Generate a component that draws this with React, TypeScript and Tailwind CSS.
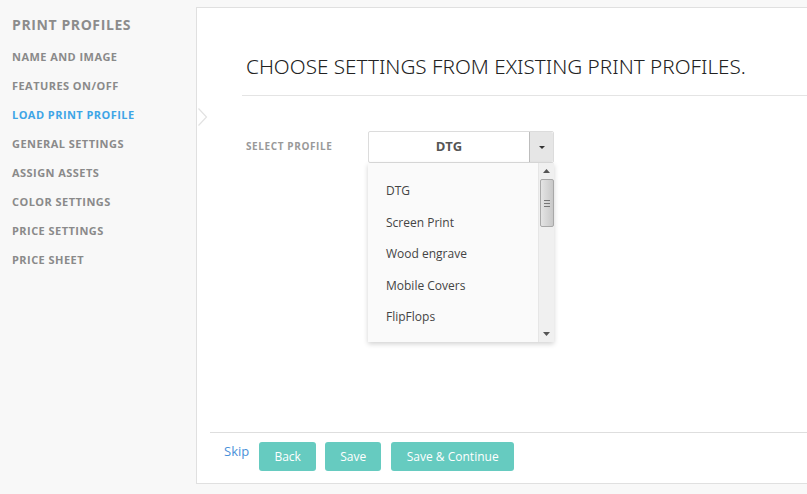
import { FC } from 'react'

const steps = [
  'NAME AND IMAGE',
  'FEATURES ON/OFF',
  'LOAD PRINT PROFILE',
  'GENERAL SETTINGS',
  'ASSIGN ASSETS',
  'COLOR SETTINGS',
  'PRICE SETTINGS',
  'PRICE SHEET',
]

const profiles = ['DTG', 'Screen Print', 'Wood engrave', 'Mobile Covers', 'FlipFlops']

const Sidebar: FC = () => (
  <aside className="w-[196px] shrink-0 pl-3 pt-[15px] font-['Open_Sans',sans-serif]">
    <div className="text-[14px] font-bold text-[#8c8c8c] leading-[20px] tracking-[0.6px]">
      PRINT PROFILES
    </div>
    <ul className="mt-[7px]">
      {steps.map((s) => (
        <li
          key={s}
          className={
            'h-[29px] leading-[29px] text-[11px] font-bold tracking-[0.45px] ' +
            (s === 'LOAD PRINT PROFILE' ? 'text-[#3ea5e6]' : 'text-[#8a8a8a]')
          }
        >
          {s}
        </li>
      ))}
    </ul>
  </aside>
)

const Scrollbar: FC = () => (
  <div className="w-[16px] shrink-0 bg-[#f0f0f0] flex flex-col items-center border-l border-[#e6e6e6]">
    <div className="h-[16px] flex items-center justify-center">
      <svg width="7" height="4" viewBox="0 0 7 4">
        <path d="M3.5 0 L7 4 L0 4 Z" fill="#555" />
      </svg>
    </div>
    <div className="w-[14px] h-[48px] rounded-[2px] border border-[#a8a8a8] bg-gradient-to-r from-[#e4e4e4] via-[#d6d6d6] to-[#c8c8c8] flex flex-col items-center justify-center gap-[2px]">
      <span className="block w-[6px] h-px bg-[#777]" />
      <span className="block w-[6px] h-px bg-[#777]" />
      <span className="block w-[6px] h-px bg-[#777]" />
    </div>
    <div className="flex-1" />
    <div className="h-[16px] flex items-center justify-center">
      <svg width="7" height="4" viewBox="0 0 7 4">
        <path d="M0 0 L7 0 L3.5 4 Z" fill="#555" />
      </svg>
    </div>
  </div>
)

const ProfileSelect: FC = () => (
  <div className="relative w-[186px]">
    <div className="flex h-[32px] border border-[#dcdcdc] rounded-[2px] bg-white">
      <div className="flex-1 flex items-center justify-center text-[13px] font-bold text-[#555]">
        DTG
      </div>
      <div className="w-[24px] bg-[#e6e6e6] border-l border-[#bdbdbd] rounded-r-[2px] flex items-center justify-center">
        <svg width="6" height="3" viewBox="0 0 6 3">
          <path d="M0 0 L6 0 L3 3 Z" fill="#333" />
        </svg>
      </div>
    </div>
    <div className="absolute left-0 top-[32px] w-[186px] h-[179px] bg-[#fafafa] shadow-[0_2px_5px_rgba(0,0,0,0.18)] flex">
      <ul className="flex-1 pt-[12px] pl-[18px]">
        {profiles.map((p) => (
          <li key={p} className="h-[31.5px] leading-[31px] text-[12px] text-[#444]">
            {p}
          </li>
        ))}
      </ul>
      <Scrollbar />
    </div>
  </div>
)

const Btn: FC<{ label: string; w: string }> = ({ label, w }) => (
  <button
    className={
      'h-[29px] rounded-[3px] bg-[#66cbc0] text-white text-[12px] ' + w
    }
  >
    {label}
  </button>
)

export default function App() {
  return (
    <div className="w-[807px] h-[494px] bg-[#f8f8f8] flex overflow-hidden font-['Open_Sans',sans-serif]">
      <Sidebar />
      <main className="relative mt-[7px] h-[477px] flex-1 bg-white border-l border-t border-b border-[#e0e0e0] flex flex-col">
        <svg
          className="absolute left-[1px] top-[100px]"
          width="10"
          height="18"
          viewBox="0 0 10 18"
        >
          <path d="M0.5 0.5 L8.5 9 L0.5 17.5" fill="none" stroke="#e2e2e2" strokeWidth="1.2" />
        </svg>
        <h1 className="ml-[49px] mt-[45px] text-[20.7px] leading-[26px] font-light text-[#222] font-['Noto_Sans',sans-serif]">
          CHOOSE SETTINGS FROM EXISTING PRINT PROFILES.
        </h1>
        <div className="ml-[45px] mt-[16px] border-b border-[#e4e4e4]" />
        <div className="flex items-start ml-[49px] mt-[35px]">
          <label className="w-[122px] pt-[8px] text-[10px] font-bold text-[#999] tracking-[0.6px]">
            SELECT PROFILE
          </label>
          <ProfileSelect />
        </div>
        <div className="flex-1" />
        <footer className="ml-[13px] border-t border-[#dedede] h-[51px] flex items-start pt-[9px]">
          <a className="ml-[14px] text-[13px] text-[#4a90d9] mr-[10px]">Skip</a>
          <div className="flex gap-[9px]">
            <Btn label="Back" w="w-[57px]" />
            <Btn label="Save" w="w-[56px]" />
            <Btn label="Save & Continue" w="w-[123px] ml-px" />
          </div>
        </footer>
      </main>
    </div>
  )
}
